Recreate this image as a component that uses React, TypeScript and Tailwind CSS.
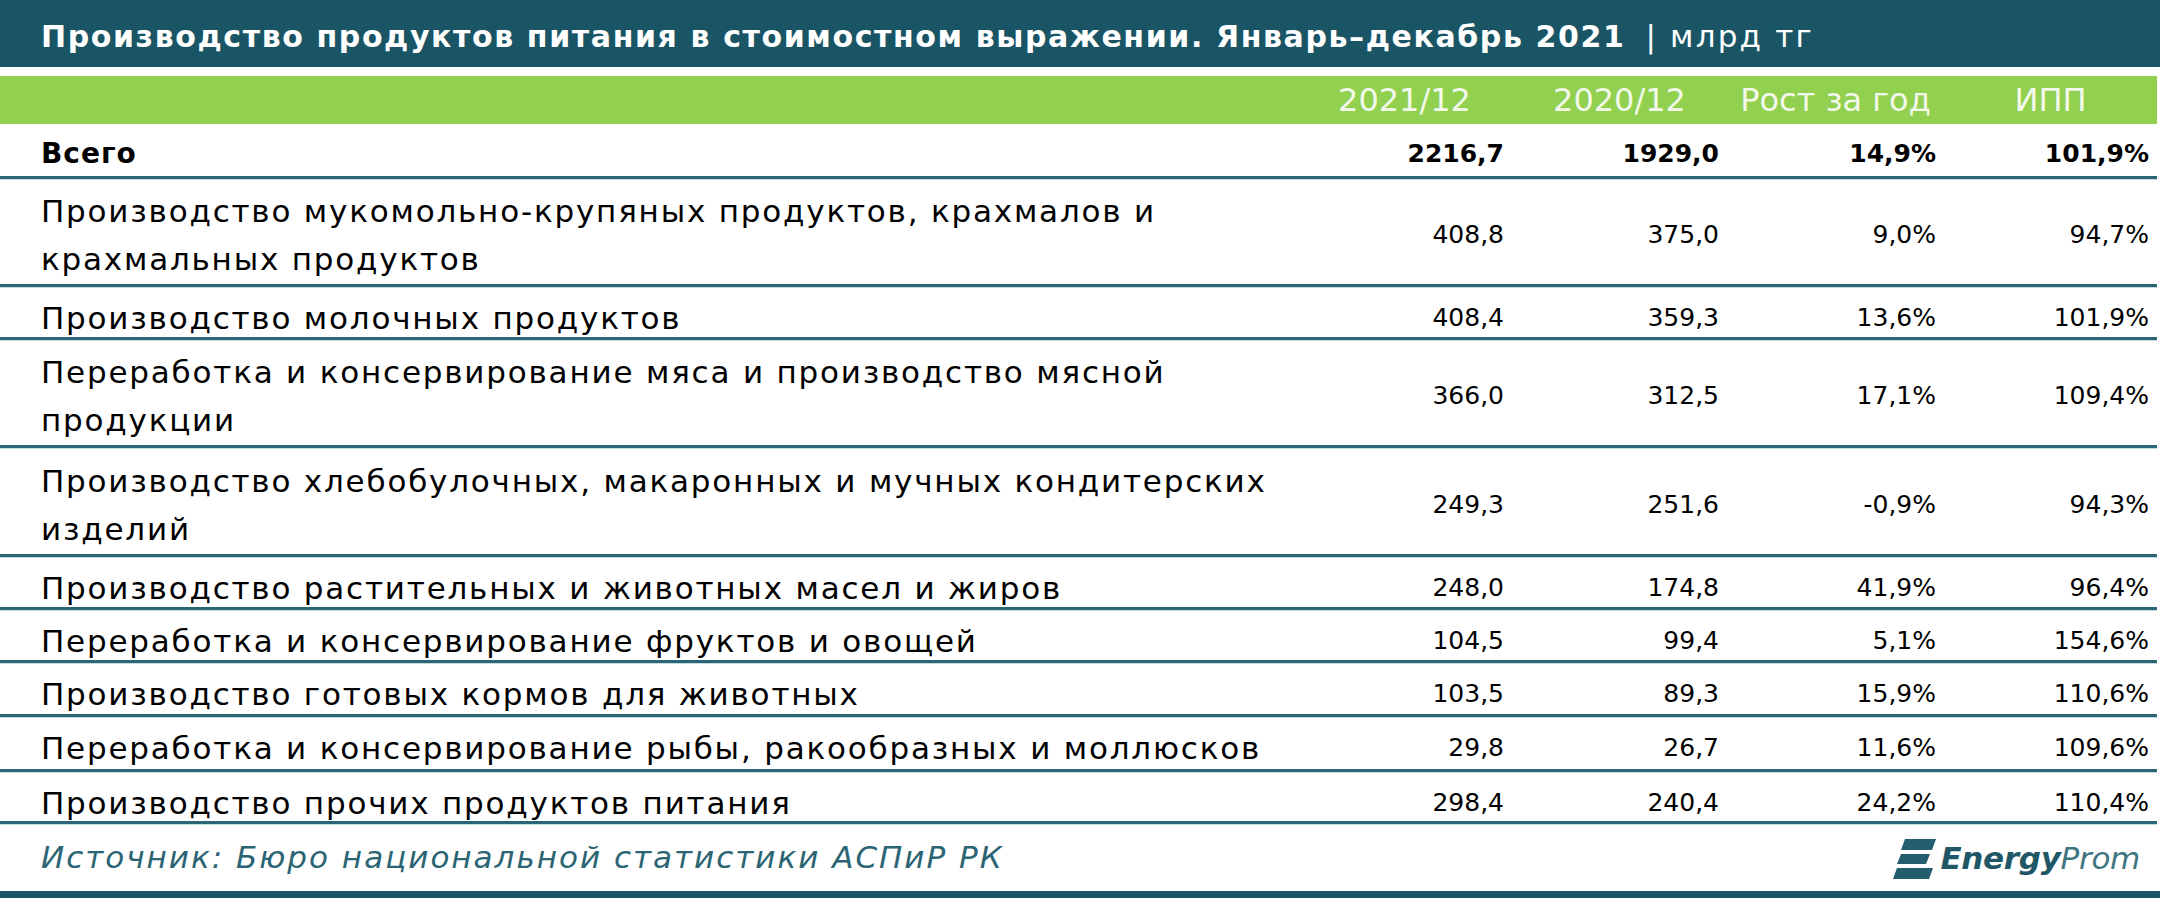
import React from "react";

type Row = {
  lines: string[];
  a: string;
  b: string;
  c: string;
  d: string;
  h: string;
};

const rows: Row[] = [
  {
    lines: ["Производство мукомольно-крупяных продуктов, крахмалов и", "крахмальных продуктов"],
    a: "408,8", b: "375,0", c: "9,0%", d: "94,7%", h: "h-[108px]",
  },
  { lines: ["Производство молочных продуктов"], a: "408,4", b: "359,3", c: "13,6%", d: "101,9%", h: "h-[53px]" },
  {
    lines: ["Переработка и консервирование мяса и производство мясной", "продукции"],
    a: "366,0", b: "312,5", c: "17,1%", d: "109,4%", h: "h-[108px]",
  },
  {
    lines: ["Производство хлебобулочных, макаронных и мучных кондитерских", "изделий"],
    a: "249,3", b: "251,6", c: "-0,9%", d: "94,3%", h: "h-[109px]",
  },
  { lines: ["Производство растительных и животных масел и жиров"], a: "248,0", b: "174,8", c: "41,9%", d: "96,4%", h: "h-[53px]" },
  { lines: ["Переработка и консервирование фруктов и овощей"], a: "104,5", b: "99,4", c: "5,1%", d: "154,6%", h: "h-[53px]" },
  { lines: ["Производство готовых кормов для животных"], a: "103,5", b: "89,3", c: "15,9%", d: "110,6%", h: "h-[54px]" },
  { lines: ["Переработка и консервирование рыбы, ракообразных и моллюсков"], a: "29,8", b: "26,7", c: "11,6%", d: "109,6%", h: "h-[55px]" },
  { lines: ["Производство прочих продуктов питания"], a: "298,4", b: "240,4", c: "24,2%", d: "110,4%", h: "h-[52px]" },
];

const grid = "grid grid-cols-[1297px_215px_215px_217px_213px] w-[2157px]";
const line = "border-b-[3px] border-[#2a6675] shadow-[0_1px_0_#c3dce2]";

function Logo() {
  return (
    <div className="flex items-center gap-[4px] mr-[20px] mt-[2px]">
      <svg width="44" height="42" viewBox="0 0 44 42">
        <polygon points="13,1 44,1 40,12 9,12" fill="#225e6d" />
        <polygon points="9,16 38,16 34,26 5,26" fill="#225e6d" />
        <polygon points="5,30 41,30 37,41 1,41" fill="#225e6d" />
      </svg>
      <span className="italic text-[31px] leading-none tracking-[-0.3px]">
        <span className="font-bold text-[#1f5766]">Energy</span>
        <span className="text-[#3f7482]">Prom</span>
      </span>
    </div>
  );
}

export default function App() {
  return (
    <div className="w-[2160px] h-[898px] bg-white flex flex-col font-['DejaVu_Sans',sans-serif] text-black overflow-hidden">
      <div className="h-[67px] shrink-0 bg-[#1a5566] flex items-center pl-[41px] pt-[6px] text-white text-[30px] tracking-[1.6px]">
        <span className="font-bold">Производство продуктов питания в стоимостном выражении. Январь–декабрь 2021</span>
        <span className="ml-[20px] text-[31px] tracking-[2.2px]">| млрд тг</span>
      </div>
      <div className="h-[9px] shrink-0" />
      <div className={`${grid} h-[48px] shrink-0 bg-[#92d050] text-[#f2f9ea] text-[32px] items-center`}>
        <div />
        <div className="text-center">2021/12</div>
        <div className="text-center">2020/12</div>
        <div className="text-center">Рост за год</div>
        <div className="text-center">ИПП</div>
      </div>
      <div className={`${grid} h-[55px] shrink-0 ${line} items-center font-bold text-[25px] pt-[8px]`}>
        <div className="pl-[41px] text-[28px] tracking-[1px]">Всего</div>
        <div className="text-right pr-[8px]">2216,7</div>
        <div className="text-right pr-[8px]">1929,0</div>
        <div className="text-right pr-[8px]">14,9%</div>
        <div className="text-right pr-[8px]">101,9%</div>
      </div>
      {rows.map((r, i) => (
        <div
          key={i}
          className={`${grid} ${r.h} shrink-0 ${line} items-center text-[25px] pt-[7px]`}
        >
          <div className="pl-[41px] text-[31px] tracking-[1.8px] leading-[48px]">
            {r.lines.map((l, j) => (
              <div key={j}>{l}</div>
            ))}
          </div>
          <div className="text-right pr-[8px]">{r.a}</div>
          <div className="text-right pr-[8px]">{r.b}</div>
          <div className="text-right pr-[8px]">{r.c}</div>
          <div className="text-right pr-[8px]">{r.d}</div>
        </div>
      ))}
      <div className="flex-1 flex items-center justify-between pl-[41px]">
        <span className="italic text-[#2b6473] text-[31px] tracking-[2px]">Источник: Бюро национальной статистики АСПиР РК</span>
        <Logo />
      </div>
      <div className="h-[7px] shrink-0 bg-[#1a5566]" />
    </div>
  );
}
